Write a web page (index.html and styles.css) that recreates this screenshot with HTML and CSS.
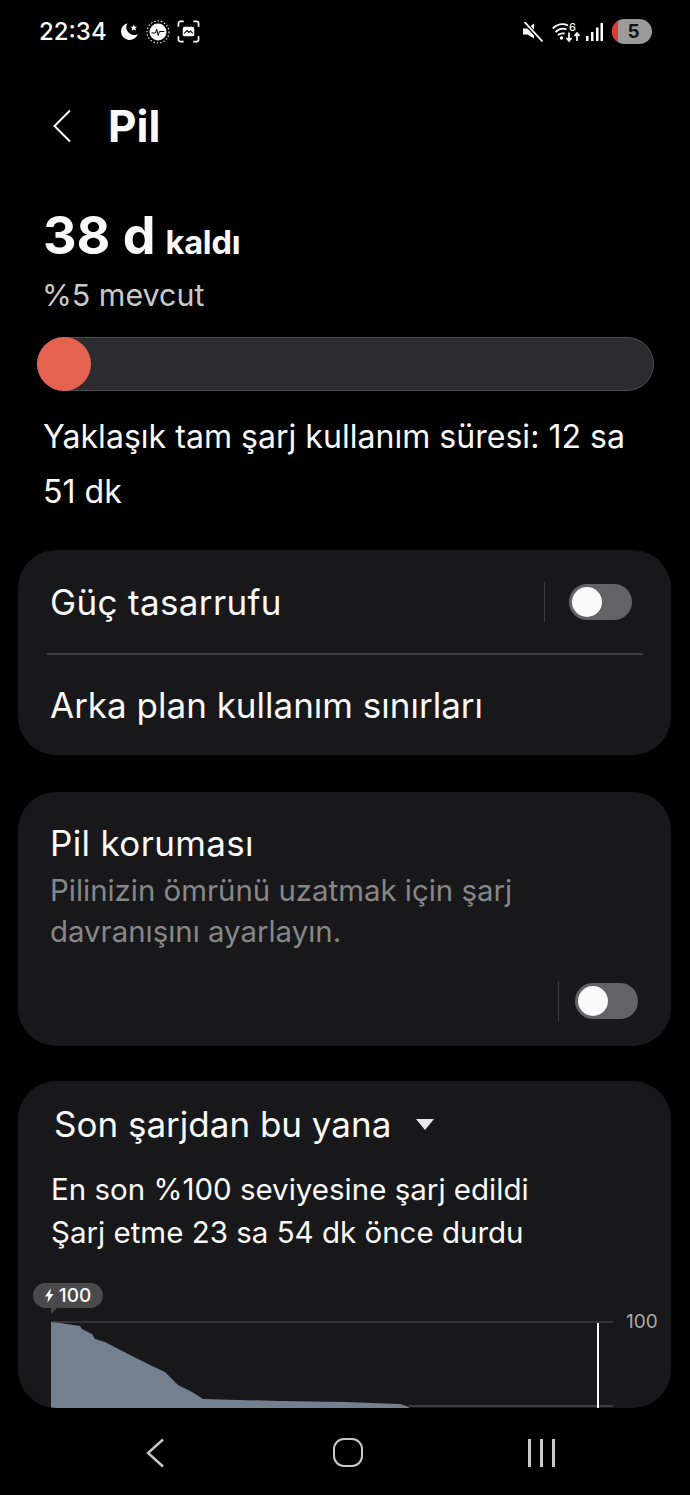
FILE: index.html
```html
<!DOCTYPE html>
<html lang="tr">
<head>
<meta charset="utf-8">
<title>Pil</title>
<link rel="stylesheet" href="styles.css">
</head>
<body>
<div class="screen">
  <div class="status">
    <div class="status-left">
      <span class="clock">22:34</span>
      <svg class="ico-moon" viewBox="0 0 20 20"><path fill="#fff" d="M8 1.200A9 9 0 1 0 18.700 12.500 8 8 0 0 1 8 1.200Z"/><path fill="#fff" d="M14.500 2.500l1 2.400 2.500.2-1.900 1.600.6 2.500-2.200-1.300-2.200 1.300.6-2.500-1.900-1.600 2.500-.2Z"/></svg>
      <svg class="ico-sun" viewBox="0 0 24 24"><circle cx="12" cy="12" r="8.500" fill="#fff"/><circle cx="12" cy="12" r="11" fill="none" stroke="#fff" stroke-width="1.100" stroke-dasharray="1.400 2"/><path d="M5.500 13h4l1.200-4 1.500 6.500 1.200-4h5" fill="none" stroke="#000" stroke-width="1"/></svg>
      <svg class="ico-shot" viewBox="0 0 24 24"><path d="M1.500 7V3.500a2 2 0 0 1 2-2H7M17 1.500h3.500a2 2 0 0 1 2 2V7M22.500 17v3.500a2 2 0 0 1-2 2H17M7 22.500H3.500a2 2 0 0 1-2-2V17" fill="none" stroke="#fff" stroke-width="1.800"/><rect x="6" y="7" width="12" height="10" rx="2" fill="#fff"/><path d="M7.500 14l3-3 2 2 1.500-1.500 2.500 2.500" fill="none" stroke="#000" stroke-width="1.100"/></svg>
    </div>
    <div class="status-right">
      <svg class="ico-mute" viewBox="0 0 20 20"><path fill="#fff" d="M0 6.500h4.500L11 1.500v15L4.500 12.500H0Z"/><path d="M1 0 20 20" stroke="#000" stroke-width="4"/><path d="M1.500 0 19.500 19.500" stroke="#fff" stroke-width="1.800"/></svg>
      <svg class="ico-wifi" viewBox="0 -2 28 24"><path d="M.8 6.500C5 2 11 1 16 3.500M3.500 10C7 6.500 11 6 14.500 7.500M6 13c2-1.500 4-2 6.500-1.500" fill="none" stroke="#fff" stroke-width="1.900"/><circle cx="9.500" cy="16" r="1.700" fill="#fff"/><path d="M17 10.500V19M25 19v-7.500M14.500 16l2.500 3 2.500-3M22.500 14l2.500-3 2.500 3" fill="none" stroke="#fff" stroke-width="1.700"/><text x="17" y="9" class="wifi-six">6</text></svg>
      <svg class="ico-signal" viewBox="0 0 18 20"><rect x="0" y="14" width="2.500" height="5" fill="#fff"/><rect x="5" y="10" width="2.500" height="9" fill="#fff"/><rect x="10" y="5.500" width="2.500" height="13.500" fill="#fff"/><rect x="14.500" y="1" width="2.500" height="18" fill="#fff"/></svg>
      <div class="batt"><span class="batt-red"></span><span class="batt-num">5</span></div>
    </div>
  </div>

  <header class="topbar">
    <svg class="back" viewBox="0 0 20 34"><path d="M18 1.500 2.500 17 18 32.500" fill="none" stroke="#fafafa" stroke-width="2"/></svg>
    <h1 class="title">Pil</h1>
  </header>

  <section class="summary">
    <div class="remain"><span class="big">38 d</span> <span class="small">kaldı</span></div>
    <div class="avail">%5 mevcut</div>
    <div class="track"><span class="dot"></span></div>
    <p class="estimate">Yaklaşık tam şarj kullanım süresi: 12 sa 51 dk</p>
  </section>

  <section class="card card-one">
    <div class="row row-saver">
      <span class="row-label spaced">Güç tasarrufu</span>
      <div class="switch-wrap"><span class="vline"></span><span class="toggle"><span class="thumb"></span></span></div>
    </div>
    <div class="divider"></div>
    <div class="row row-limits"><span class="row-label">Arka plan kullanım sınırları</span></div>
  </section>

  <section class="card card-two">
    <div class="row-label spaced">Pil koruması</div>
    <p class="desc">Pilinizin ömrünü uzatmak için şarj davranışını ayarlayın.</p>
    <div class="switch-wrap end"><span class="vline"></span><span class="toggle"><span class="thumb"></span></span></div>
  </section>

  <section class="card card-three">
    <div class="since"><span>Son şarjdan bu yana</span><span class="caret"></span></div>
    <div class="since-info">En son %100 seviyesine şarj edildi<br>Şarj etme 23 sa 54 dk önce durdu</div>
    <div class="chart">
      <svg class="chart-svg" viewBox="0 0 620 92">
        <path d="M0 6H562" stroke="#3d3d3f" stroke-width="1.500"/>
        <path d="M358 90H562" stroke="#3d3d3f" stroke-width="2"/>
        <path fill="#74808f" d="M0 6 9 7 29 10 31 13 41 18 44 23 54 26 79 39 99 49 114 56 127 69 141 76 152 83 229 85 294 86 349 88 358 91 358 92 0 92Z"/>
        <path d="M547 7V92" stroke="#fafafa" stroke-width="2"/>
      </svg>
      <div class="bubble"><svg class="bolt" viewBox="0 0 10 16"><path fill="#fff" d="M6.500 0 0 9h3.800L2.500 16 9.500 6.200H5.800Z"/></svg>100</div>
      <span class="axis">100</span>
    </div>
  </section>

  <nav class="navbar">
    <svg class="nav-back" viewBox="0 0 20 30"><path d="M18 1.500 3 15l15 13.500" fill="none" stroke="#c8c8c8" stroke-width="2.400"/></svg>
    <span class="nav-home"></span>
    <span class="nav-recent"><i></i><i></i><i></i></span>
  </nav>
</div>
</body>
</html>
```

FILE: styles.css
```css
* { box-sizing: border-box; }
html, body { margin: 0; padding: 0; background: #000; }
body { font-family: "Inter", "Liberation Sans", sans-serif; color: #fafafa; }
.screen { width: 690px; height: 1495px; overflow: hidden; position: relative; background: #000; }

.status { height: 62px; display: flex; justify-content: space-between; align-items: center; padding: 1px 38px 0 39px; }
.status-left, .status-right { display: flex; align-items: center; }
.clock { font-size: 24px; font-weight: 500; width: 81px; }
.ico-moon { width: 19px; height: 19px; }
.ico-sun { width: 24px; height: 24px; margin-left: 7px; }
.ico-shot { width: 23px; height: 23px; margin-left: 7px; }
.ico-mute { width: 20px; height: 20px; }
.ico-wifi { width: 28px; height: 24px; margin-left: 9px; }
.wifi-six { font-size: 11px; font-weight: 500; fill: #fff; font-family: "Inter", sans-serif; }
.ico-signal { width: 18px; height: 20px; margin-left: 6px; }
.batt { width: 40px; height: 25px; margin-left: 8px; border-radius: 13px; background: #9b9b9b; position: relative; overflow: hidden; display: flex; align-items: center; justify-content: center; }
.batt-red { position: absolute; left: 0; top: 0; bottom: 0; width: 6px; background: #e0392f; }
.batt-num { font-size: 19px; font-weight: 700; color: #111; margin-left: 3px; }

.topbar { height: 64px; margin-top: 32px; display: flex; align-items: center; padding-left: 52px; }
.back { width: 20px; height: 34px; }
.title { margin: 0 0 0 36px; font-size: 44px; font-weight: 700; line-height: 64px; }

.summary { padding: 0 37px; margin-top: 42px; }
.remain { height: 72px; padding-left: 6px; display: flex; align-items: baseline; gap: 10px; line-height: 72px; }
.big { font-size: 52px; font-weight: 700; }
.small { font-size: 32.500px; font-weight: 700; letter-spacing: -0.2px; }
.avail { padding-left: 5px; font-size: 30.400px; color: #c9c9c9; line-height: 46px; height: 46px; }
.track { margin-top: 19px; height: 54px; width: 617px; border-radius: 27px; background: #2c2c2e; border: 1px solid #4c4c4e; position: relative; }
.dot { position: absolute; left: -1px; top: -1px; width: 54px; height: 54px; border-radius: 50%; background: #e4624f; }
.estimate { margin: 18px 0 0; padding-left: 6px; font-size: 32.100px; line-height: 55px; width: 610px; height: 56px; }

.card { width: 653px; margin-left: 18px; background: #18181a; border-radius: 38px; }
.card-one { margin-top: 85px; height: 205px; padding: 0 28px 0 32px; }
.row { display: flex; align-items: center; justify-content: space-between; }
.row-saver { height: 103px; }
.row-limits { height: 100px; }
.row-label { font-size: 35px; line-height: 46px; }
.spaced { letter-spacing: 0.35px; }
.switch-wrap { display: flex; align-items: center; }
.vline { width: 1px; height: 40px; background: #3d3d3f; }
.toggle { width: 63px; height: 36px; border-radius: 18px; background: #636366; margin-left: 24px; position: relative; display: block; }
.thumb { position: absolute; left: 3px; top: 3px; width: 30px; height: 30px; border-radius: 50%; background: #fafafa; }
.row-saver .switch-wrap { margin-right: 11px; }
.divider { height: 2px; background: #3d3d3f; margin: 0 0 0 -3px; }

.card-two { margin-top: 37px; height: 254px; padding: 28px 33px 0 32px; }
.desc { margin: 4px 0 0; font-size: 29.400px; line-height: 41px; color: #87878a; width: 520px; }
.end { justify-content: flex-end; margin-top: 29px; }
.end .toggle { margin-left: 16px; }

.card-three { margin-top: 35px; height: 327px; overflow: hidden; padding: 21px 0 0 33px; }
.since { display: flex; align-items: center; font-size: 35px; line-height: 44px; padding-left: 3px; }
.caret { margin-left: 25px; width: 0; height: 0; border-left: 9px solid transparent; border-right: 9px solid transparent; border-top: 11px solid #e8e8e8; }
.since-info { margin-top: 22px; font-size: 29.500px; line-height: 43px; }
.chart { position: relative; margin-top: 29px; height: 100px; }
.chart-svg { position: absolute; left: 0; top: 33px; width: 620px; height: 92px; }
.bubble { position: absolute; left: -18px; top: 0; width: 70px; height: 25px; border-radius: 13px; background: #4a4a4c; display: flex; align-items: center; justify-content: center; font-size: 19px; font-weight: 500; gap: 5px; }
.bubble::after { content: ""; position: absolute; left: 18px; bottom: -6px; border-right: 6px solid transparent; border-top: 6px solid #4a4a4c; }
.bolt { width: 9px; height: 15px; }
.axis { position: absolute; left: 575px; top: 27px; font-size: 19px; color: #a9a9a9; }

.navbar { height: 87px; padding-top: 2px; display: flex; align-items: center; padding-left: 145px; }
.nav-back { width: 20px; height: 30px; }
.nav-home { width: 30px; height: 29px; border: 2.5px solid #c8c8c8; border-radius: 11px; margin-left: 168px; }
.nav-recent { margin-left: 165px; display: flex; gap: 9.500px; }
.nav-recent i { display: block; width: 2.500px; height: 28px; background: #c8c8c8; }
```
